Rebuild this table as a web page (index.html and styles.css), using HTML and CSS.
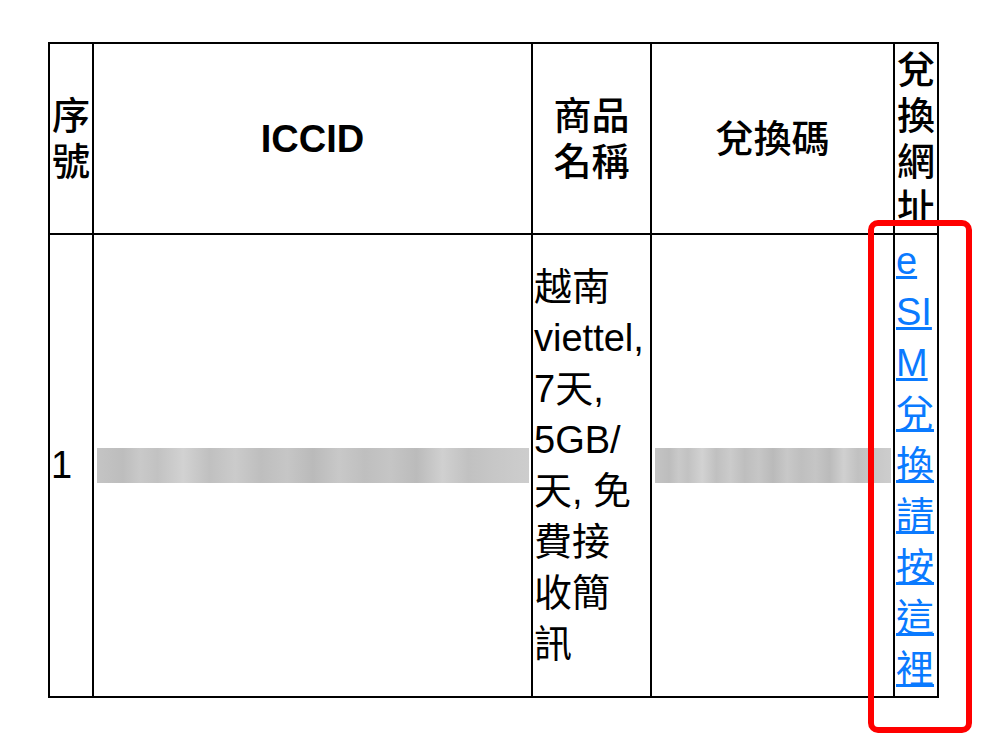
FILE: index.html
```html
<!DOCTYPE html>
<html lang="zh-Hant">
<head>
<meta charset="utf-8">
<title>eSIM</title>
<link rel="stylesheet" href="styles.css">
</head>
<body>
<div class="page">
  <table class="orders">
    <colgroup>
      <col class="c-no">
      <col class="c-iccid">
      <col class="c-name">
      <col class="c-code">
      <col class="c-url">
    </colgroup>
    <thead>
      <tr>
        <th>序號</th>
        <th class="latin">ICCID</th>
        <th>商品<br>名稱</th>
        <th>兌換碼</th>
        <th>兌換網址</th>
      </tr>
    </thead>
    <tbody>
      <tr>
        <td>1</td>
        <td><span class="masked"></span></td>
        <td>越南<br>viettel,<br>7天,<br>5GB/<br>天, 免<br>費接<br>收簡<br>訊</td>
        <td><span class="masked masked-code"></span></td>
        <td class="url-cell"><a href="#">eSIM兌換請按這裡</a></td>
      </tr>
    </tbody>
  </table>
  <div class="highlight"></div>
</div>
</body>
</html>
```

FILE: styles.css
```css
html, body {
  margin: 0;
  padding: 0;
  background: #ffffff;
}

body {
  font-family: "Liberation Sans", "Noto Sans CJK TC", sans-serif;
  color: #000000;
}

.page {
  position: relative;
  box-sizing: border-box;
  min-height: 753px;
  padding: 42px 0 0 48px;
}

.orders {
  border-collapse: collapse;
  table-layout: fixed;
  width: 890px;
  font-size: 38px;
}

.c-no { width: 44px; }
.c-iccid { width: 439px; }
.c-name { width: 119px; }
.c-code { width: 243px; }
.c-url { width: 44px; }

.orders th,
.orders td {
  border: 2px solid #000000;
}

.orders th {
  font-weight: 500;
  line-height: 46px;
  padding: 3px 1px 2px;
  text-align: center;
  vertical-align: middle;
}

.orders th.latin {
  font-weight: 700;
}

.orders td {
  font-weight: 400;
  line-height: 51px;
  padding: 1px 1px;
  text-align: left;
  vertical-align: middle;
}

.masked {
  display: block;
  height: 35px;
  margin: 0 1px 0 2px;
  background:
    linear-gradient(90deg,
      #c4c4c4 0%, #bdbdbd 6%, #c9c9c9 10%, #c2c2c2 14%, #d2d2d2 20%,
      #c0c0c0 26%, #cbcbcb 32%, #bebebe 38%, #c6c6c6 44%, #bababa 50%,
      #c8c8c8 56%, #bfbfbf 62%, #c5c5c5 68%, #bbbbbb 74%, #d0d0d0 80%,
      #c1c1c1 86%, #c7c7c7 92%, #cdcdcd 100%);
}

.masked-code {
  margin: 0 1px 0 2px;
}

.url-cell {
  word-break: break-all;
}

.url-cell a {
  color: #0a7aff;
  text-decoration: underline;
}

.highlight {
  position: absolute;
  left: 868px;
  top: 220px;
  width: 92px;
  height: 501px;
  border: 6px solid #ff0000;
  border-radius: 10px;
}
```
